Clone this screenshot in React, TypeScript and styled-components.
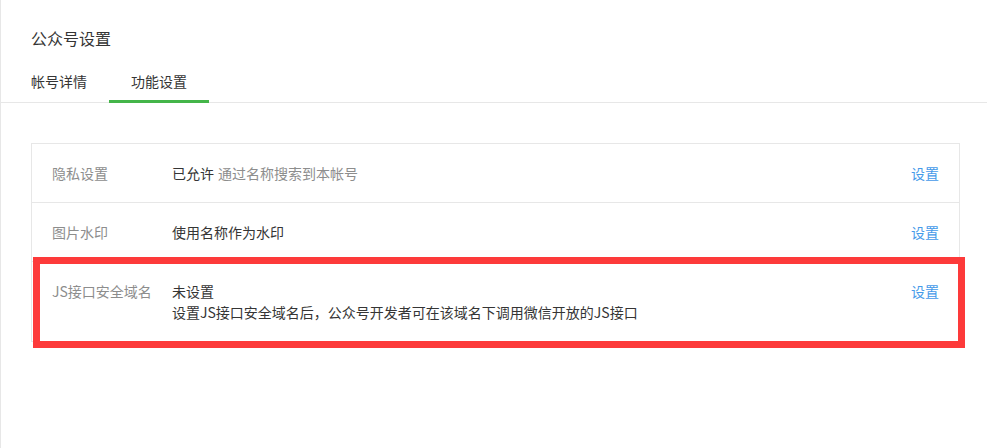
import React from "react";
import styled, { createGlobalStyle } from "styled-components";

const GlobalStyle = createGlobalStyle`
  html, body {
    margin: 0;
    padding: 0;
    background: #fff;
  }
  body {
    font-family: "Noto Sans CJK SC", "Liberation Sans", sans-serif;
    font-size: 14px;
    color: #353535;
  }
`;

const Page = styled.div`
  box-sizing: border-box;
  width: 987px;
  height: 448px;
  border-left: 1px solid #e7e7e7;
  padding-top: 26px;
`;

const Title = styled.h2`
  margin: 0 0 12px;
  padding-left: 30px;
  font-size: 16px;
  font-weight: 400;
  line-height: 24px;
  color: #353535;
`;

const TabBar = styled.div`
  display: flex;
  height: 40px;
  padding-left: 8px;
  border-bottom: 1px solid #e7e7e7;
`;

const Tab = styled.div<{ $active?: boolean }>`
  width: 100px;
  height: 38px;
  line-height: 38px;
  text-align: center;
  font-size: 14px;
  color: #353535;
  border-bottom: 3px solid ${({ $active }) => ($active ? "#44b549" : "transparent")};
  margin-bottom: -1px;
  cursor: pointer;
`;

const Content = styled.div`
  padding: 40px 27px 0 30px;
`;

const Table = styled.div`
  border: 1px solid #e7e7e7;
  border-bottom: none;
`;

const Row = styled.div<{ $marked?: boolean }>`
  position: relative;
  display: flex;
  align-items: flex-start;
  padding: 19px 20px 19px 20px;
  border-bottom: 1px solid #e7e7e7;
  line-height: 20px;

  ${({ $marked }) =>
    $marked &&
    `
    &::after {
      content: "";
      position: absolute;
      top: -5px;
      left: 1px;
      right: -6px;
      bottom: -7px;
      border: 7px solid #fd3a3a;
      pointer-events: none;
    }
  `}
`;

const Label = styled.div`
  width: 120px;
  flex-shrink: 0;
  color: #8d8d8d;
`;

const Value = styled.div`
  flex: 1;
  color: #353535;
`;

const Line = styled.div`
  & + & {
    margin-top: 1px;
  }
`;

const Tip = styled.span`
  color: #8d8d8d;
  margin-left: 4px;
`;

const Action = styled.a`
  flex-shrink: 0;
  color: #459ae9;
  text-decoration: none;
  cursor: pointer;
`;

export default function App() {
  return (
    <>
      <GlobalStyle />
      <Page>
        <Title>公众号设置</Title>
        <TabBar>
          <Tab>帐号详情</Tab>
          <Tab $active>功能设置</Tab>
        </TabBar>
        <Content>
          <Table>
            <Row>
              <Label>隐私设置</Label>
              <Value>
                已允许<Tip>通过名称搜索到本帐号</Tip>
              </Value>
              <Action>设置</Action>
            </Row>
            <Row>
              <Label>图片水印</Label>
              <Value>使用名称作为水印</Value>
              <Action>设置</Action>
            </Row>
            <Row $marked>
              <Label>JS接口安全域名</Label>
              <Value>
                <Line>未设置</Line>
                <Line>设置JS接口安全域名后，公众号开发者可在该域名下调用微信开放的JS接口</Line>
              </Value>
              <Action>设置</Action>
            </Row>
          </Table>
        </Content>
      </Page>
    </>
  );
}
